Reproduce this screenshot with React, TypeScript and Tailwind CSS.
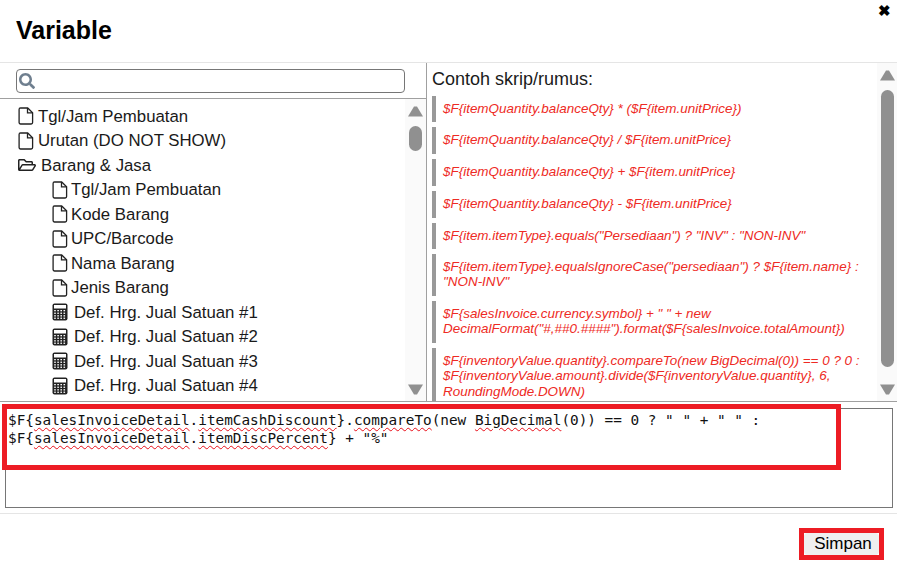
import * as React from 'react';
import { FaRegFolderOpen, FaSearch } from 'react-icons/fa';

const sans = { fontFamily: '"Liberation Sans", Arial, sans-serif' };

function FileIcon() {
  return (
    <svg width="16" height="18" viewBox="0 0 16 18" className="shrink-0" fill="none" stroke="#222" strokeWidth="1.3">
      <path d="M2.5 1h7.2L14.6 5.8V15.6a1.4 1.4 0 0 1-1.4 1.4H2.5a1.4 1.4 0 0 1-1.4-1.4V2.4A1.4 1.4 0 0 1 2.5 1z" />
      <path d="M9.5 1v4.9h5" />
    </svg>
  );
}

function CalcIcon() {
  return (
    <svg width="16" height="18" viewBox="0 0 16 18" className="shrink-0">
      <rect x="0.5" y="0.5" width="15" height="17" rx="2" fill="#222" />
      <rect x="2" y="2" width="12" height="3.5" fill="#fff" />
      {[7, 9.6, 12.2, 14.6].map((y) =>
        [2.2, 5.3, 8.4, 11.5].map((x) => <rect key={`${x}-${y}`} x={x} y={y} width="1.6" height="1.3" fill="#fff" />),
      )}
    </svg>
  );
}

function Triangle({ down }: { down?: boolean }) {
  return (
    <svg width="15" height="11" viewBox="0 0 15 11" className="shrink-0">
      <path d={down ? 'M0 0.5h15L9 10.5H6z' : 'M6 0.5h3l6 10H0z'} fill="#909090" />
    </svg>
  );
}

function Wavy({ children }: { children: React.ReactNode }) {
  return <span className="underline decoration-wavy decoration-[#e8101a] decoration-1 underline-offset-2">{children}</span>;
}

const treeTop = [
  { label: 'Tgl/Jam Pembuatan', icon: 'file', indent: 0 },
  { label: 'Urutan (DO NOT SHOW)', icon: 'file', indent: 0 },
  { label: 'Barang & Jasa', icon: 'folder', indent: 0 },
  { label: 'Tgl/Jam Pembuatan', icon: 'file', indent: 1 },
  { label: 'Kode Barang', icon: 'file', indent: 1 },
  { label: 'UPC/Barcode', icon: 'file', indent: 1 },
  { label: 'Nama Barang', icon: 'file', indent: 1 },
  { label: 'Jenis Barang', icon: 'file', indent: 1 },
  { label: 'Def. Hrg. Jual Satuan #1', icon: 'calc', indent: 1 },
  { label: 'Def. Hrg. Jual Satuan #2', icon: 'calc', indent: 1 },
  { label: 'Def. Hrg. Jual Satuan #3', icon: 'calc', indent: 1 },
  { label: 'Def. Hrg. Jual Satuan #4', icon: 'calc', indent: 1 },
];

const samples = [
  '$F{itemQuantity.balanceQty} * ($F{item.unitPrice})',
  '$F{itemQuantity.balanceQty} / $F{item.unitPrice}',
  '$F{itemQuantity.balanceQty} + $F{item.unitPrice}',
  '$F{itemQuantity.balanceQty} - $F{item.unitPrice}',
  '$F{item.itemType}.equals("Persediaan") ? "INV" : "NON-INV"',
  '$F{item.itemType}.equalsIgnoreCase("persediaan") ? $F{item.name} : "NON-INV"',
  '$F{salesInvoice.currency.symbol} + " " + new DecimalFormat("#,##0.####").format($F{salesInvoice.totalAmount})',
  '$F{inventoryValue.quantity}.compareTo(new BigDecimal(0)) == 0 ? 0 : $F{inventoryValue.amount}.divide($F{inventoryValue.quantity}, 6, RoundingMode.DOWN)',
];

export default function App() {
  return (
    <div className="relative h-[573px] w-[897px] overflow-hidden bg-white text-[#1a1a1a]" style={sans}>
      <div className="flex h-[63px] items-center border-b border-[#e5e5e5] pl-4">
        <h1 className="text-[25px] font-bold text-black">Variable</h1>
      </div>
      <span className="absolute right-[6px] top-[3px] text-[15px] leading-4 font-bold text-black">✖</span>

      <div className="flex h-[339px] border-b border-[#a0a0a0]">
        <div className="flex w-[427px] shrink-0 flex-col border-r border-[#a0a0a0]">
          <div className="h-[36px] shrink-0 border-b border-[#a0a0a0] pl-4 pt-[6px]">
            <div className="flex h-6 w-[389px] items-center rounded-sm border border-[#767676] pl-[2px]">
              <FaSearch className="text-[#6f7f8f]" size={16} />
            </div>
          </div>
          <div className="flex min-h-0 flex-1">
            <ul className="min-w-0 flex-1 overflow-hidden pl-[18px] pt-[5px]">
              {treeTop.map((row, i) => (
                <li
                  key={i}
                  className={`flex h-[24.5px] items-center text-[16.8px] ${row.indent ? 'pl-[34px]' : ''} ${
                    row.icon === 'calc' ? 'gap-[6px]' : row.icon === 'folder' ? 'gap-[5px]' : row.indent ? 'gap-[3px]' : 'gap-[4px]'
                  }`}
                >
                  {row.icon === 'file' && <FileIcon />}
                  {row.icon === 'calc' && <CalcIcon />}
                  {row.icon === 'folder' && <FaRegFolderOpen size={18} className="text-[#222]" />}
                  <span>{row.label}</span>
                </li>
              ))}
            </ul>
            <div className="flex w-[21px] shrink-0 flex-col items-center bg-[#fafafa] pt-[7px] pb-[6px]">
              <Triangle />
              <div className="mt-[9px] h-[25px] w-[13px] rounded-full bg-[#909090]" />
              <div className="flex-1" />
              <Triangle down />
            </div>
          </div>
        </div>

        <div className="flex min-w-0 flex-1">
          <div className="min-w-0 flex-1 overflow-hidden pl-[5px] pr-[9px] pt-[5px]">
            <h2 className="text-[18px] leading-[22px]">Contoh skrip/rumus:</h2>
            <div className="mt-[5.75px] flex flex-col gap-[5px]">
              {samples.map((s) => (
                <blockquote key={s} className="border-l-4 border-[#999] pt-[5px] pb-[6.4px] pl-[7px] text-[13.44px] leading-[15.3px] text-[#ee2a24] italic">
                  {s}
                </blockquote>
              ))}
            </div>
          </div>
          <div className="flex w-[20px] shrink-0 flex-col items-center bg-[#fafafa] pt-[7px] pb-[6px]">
            <Triangle />
            <div className="mt-[9px] h-[277px] w-[13px] rounded-full bg-[#909090]" />
            <div className="flex-1" />
            <Triangle down />
          </div>
        </div>
      </div>

      <div className="px-[5px] pt-[6px]">
        <div
          className="h-[100px] w-[888px] border border-[#767676] px-[2px] py-[2px] text-[14.36px] leading-[18px] text-[#111]"
          style={{ fontFamily: '"DejaVu Sans Mono", monospace' }}
        >
          $F{'{'}<Wavy>salesInvoiceDetail</Wavy>.<Wavy>itemCashDiscount</Wavy>{'}'}.<Wavy>compareTo</Wavy>(new <Wavy>BigDecimal</Wavy>(0)) == 0 ? " " + " " :
          <br />
          $F{'{'}<Wavy>salesInvoiceDetail</Wavy>.<Wavy>itemDiscPercent</Wavy>{'}'} + "%"
        </div>
      </div>

      <div className="mt-[5px] flex justify-end border-t border-[#e5e5e5] pr-[18px] pt-[19px]">
        <button className="h-[22px] w-[75px] rounded-sm bg-[#efefef] pl-[3px] text-[17px] leading-[22px] text-black">Simpan</button>
      </div>

      {/* red annotation boxes */}
      <div className="pointer-events-none absolute left-[2px] top-[404px] h-[66px] w-[839px] border-[5px] border-[#ed1c24]" />
      <div className="pointer-events-none absolute left-[799px] top-[528px] h-[32px] w-[85px] border-[5px] border-[#ed1c24]" />
    </div>
  );
}
